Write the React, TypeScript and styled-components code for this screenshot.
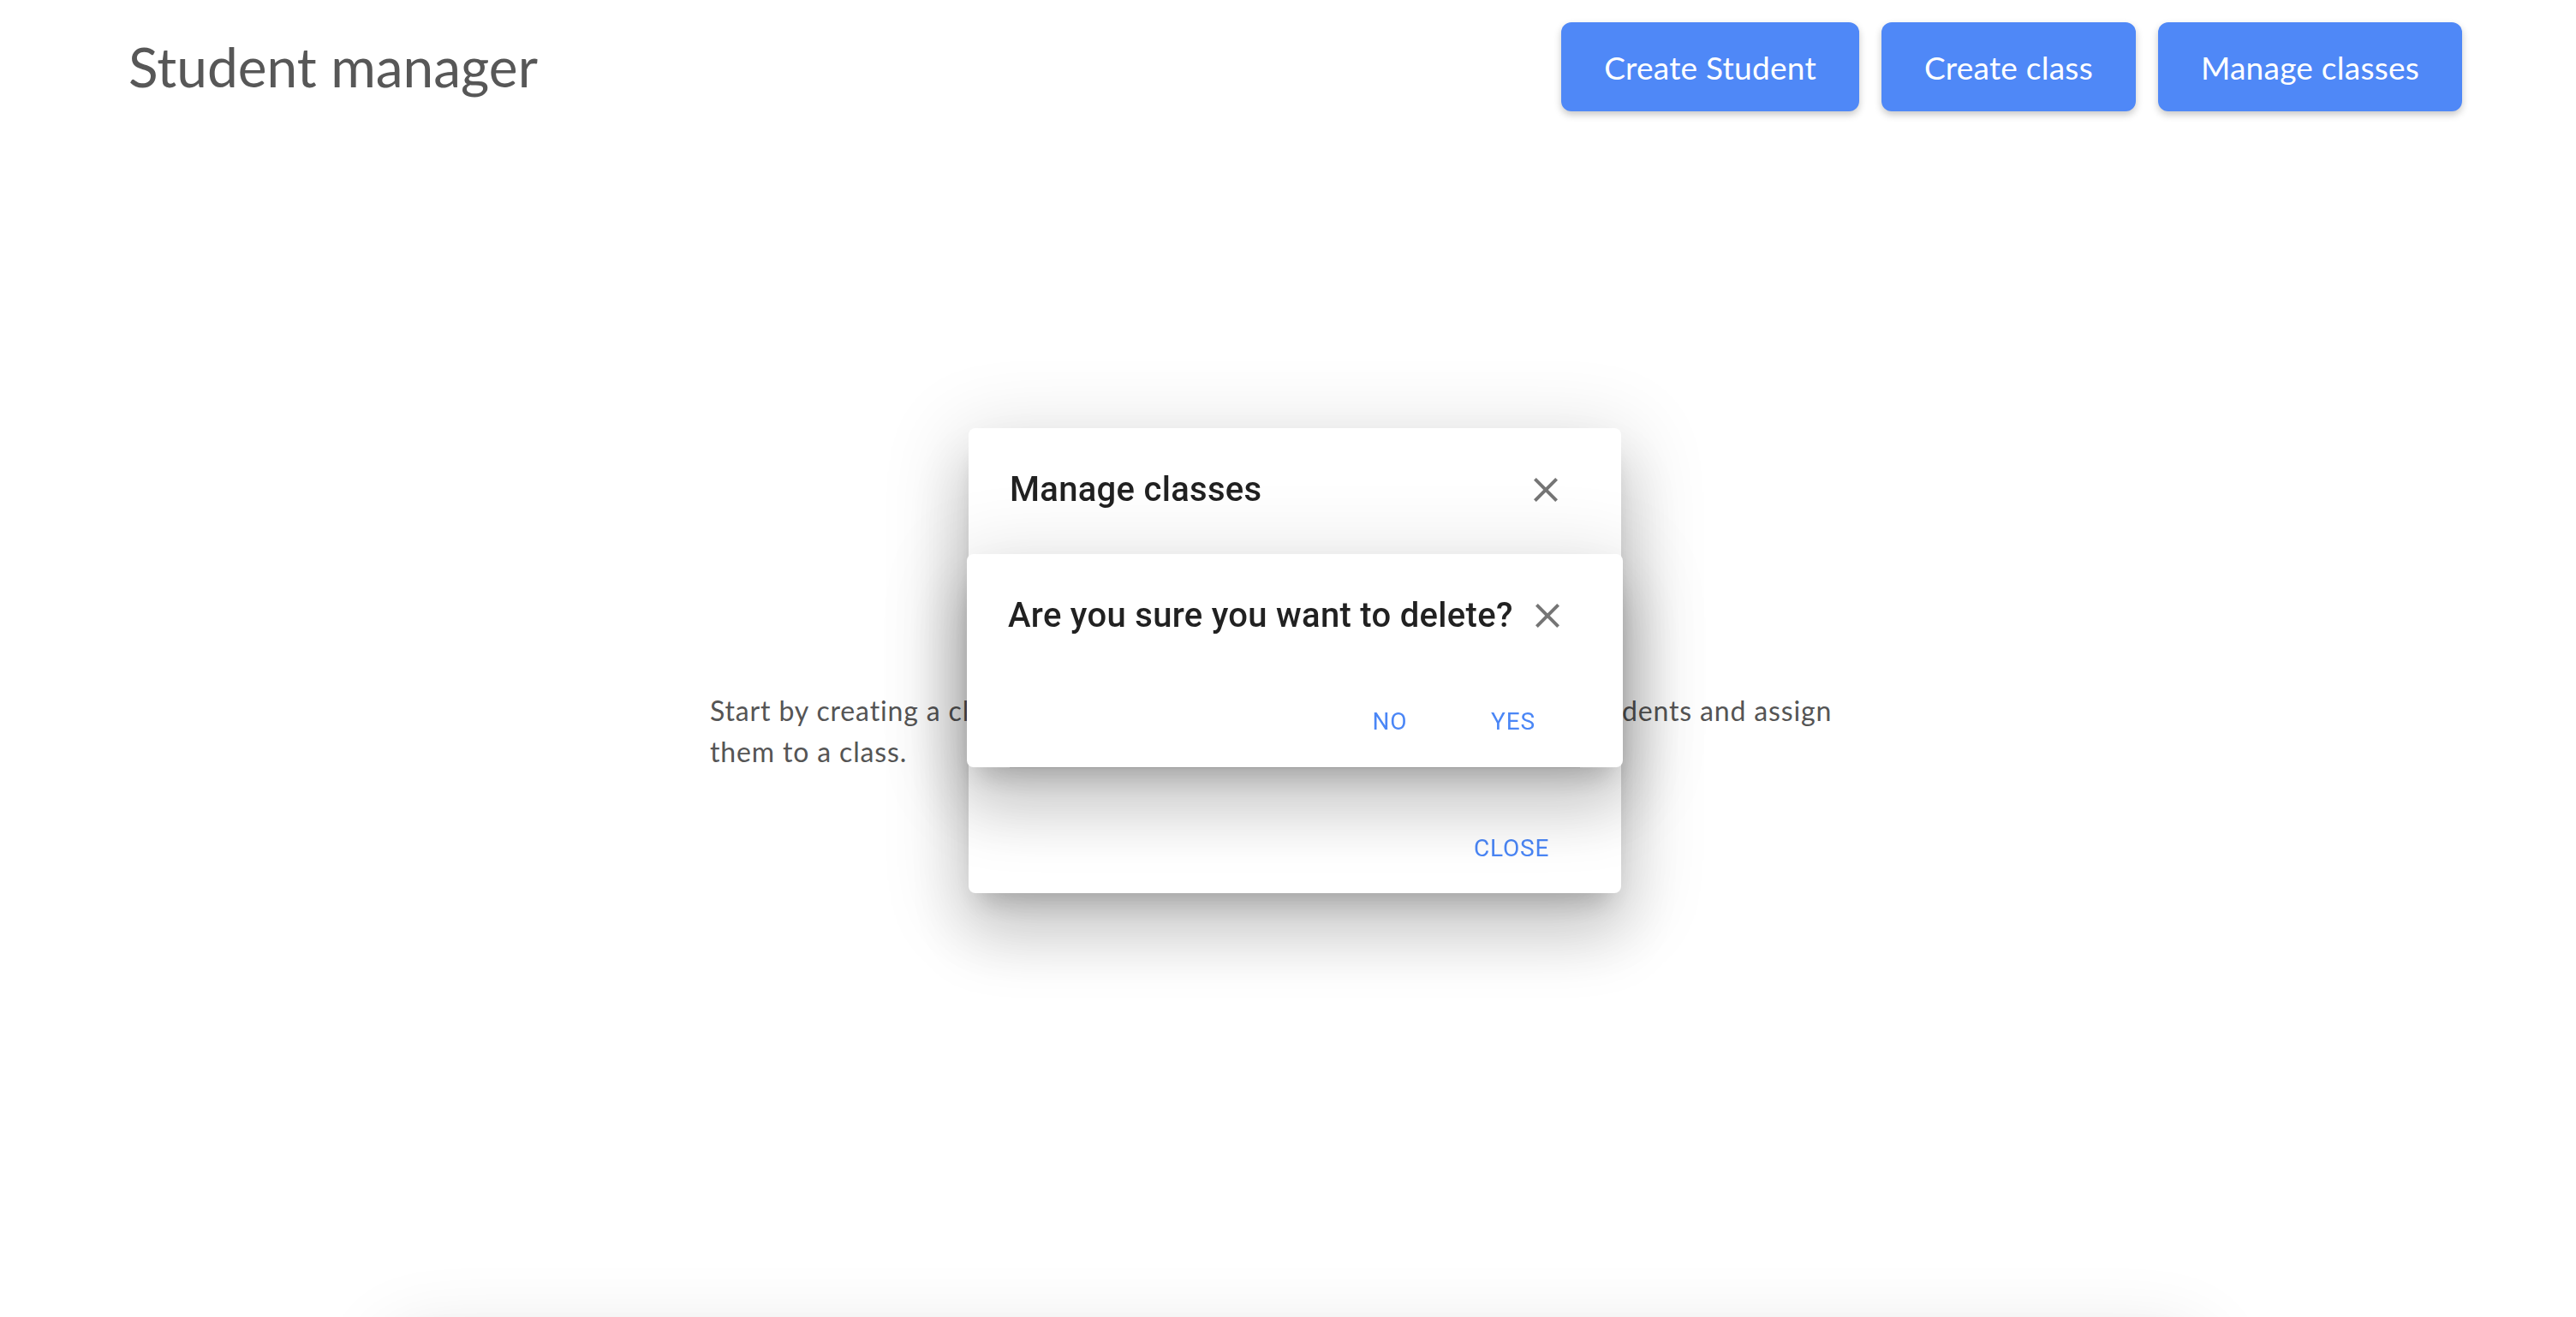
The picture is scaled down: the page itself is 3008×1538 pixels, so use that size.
import React from "react";
import styled, { createGlobalStyle } from "styled-components";

const GlobalStyle = createGlobalStyle`
  * { box-sizing: border-box; }
  html, body { margin: 0; padding: 0; background: #ffffff; }
  body {
    padding-left: 16px;
    font-family: Lato, "Noto Sans", "Open Sans", sans-serif;
    color: #555555;
  }
`;

const Page = styled.div`
  display: flex;
  flex-direction: column;
`;

const Header = styled.header`
  display: flex;
  align-items: center;
  justify-content: space-between;
  padding: 26px 133px 0 134px;
`;

const AppTitle = styled.h1`
  margin: 0;
  font-size: 64px;
  line-height: 1;
  font-weight: 400;
  color: #575757;
`;

const Toolbar = styled.nav`
  display: flex;
  gap: 26px;
`;

const PrimaryButton = styled.button`
  height: 104px;
  padding: 0 50px;
  border: none;
  border-radius: 12px;
  background: #4f88f7;
  color: #ffffff;
  font-family: Lato, "Noto Sans", sans-serif;
  font-size: 37px;
  letter-spacing: 0.25px;
  box-shadow: 0 4px 8px rgba(0, 0, 0, 0.22);
  cursor: pointer;
`;

const Main = styled.main`
  width: 1366px;
  margin: 676px auto 0;
`;

const Intro = styled.p`
  margin: 0;
  font-size: 32px;
  line-height: 48px;
  letter-spacing: 0.85px;
  color: #555555;
`;

const StudentCard = styled.section`
  width: 2084px;
  height: 400px;
  margin: 658px auto 0;
  border-radius: 8px;
  background: #ffffff;
  box-shadow: 0 18px 92px 16px rgba(0, 0, 0, 0.12), 0 48px 76px 6px rgba(0, 0, 0, 0.14);
`;

const Overlay = styled.div`
  position: fixed;
  inset: 0;
  display: flex;
  align-items: center;
  justify-content: center;
  padding: 5px 0 0 16px;
`;

const DialogPaper = styled.div<{ $width: number }>`
  width: ${(p) => p.$width}px;
  display: flex;
  flex-direction: column;
  background: #ffffff;
  border-radius: 8px;
  font-family: Roboto, "Noto Sans", sans-serif;
  box-shadow: 0 22px 30px -14px rgba(0, 0, 0, 0.2), 0 48px 76px 6px rgba(0, 0, 0, 0.14),
    0 18px 92px 16px rgba(0, 0, 0, 0.12);
`;

const TitleRow = styled.div`
  display: flex;
  align-items: center;
  justify-content: space-between;
  padding: 40px 56px 0 48px;
`;

const DialogTitle = styled.h2`
  margin: 0;
  font-size: 40px;
  line-height: 64px;
  font-weight: 500;
  letter-spacing: 0.3px;
  white-space: nowrap;
  color: rgba(0, 0, 0, 0.87);
`;

const IconButton = styled.button`
  flex-shrink: 0;
  width: 64px;
  height: 64px;
  display: flex;
  align-items: center;
  justify-content: center;
  padding: 0;
  border: none;
  border-radius: 50%;
  background: transparent;
  color: rgba(0, 0, 0, 0.54);
  cursor: pointer;
`;

const DialogContent = styled.div`
  padding: 44px 48px 41px;
`;

const ClassList = styled.ul`
  margin: 0;
  padding: 0;
  list-style: none;
`;

const ClassRow = styled.li`
  height: 83px;
  display: flex;
  align-items: center;
  justify-content: space-between;
  border-bottom: 2px solid rgba(0, 0, 0, 0.12);
  font-size: 32px;
  color: rgba(0, 0, 0, 0.87);
`;

const Actions = styled.div<{ $top: number; $bottom: number }>`
  display: flex;
  justify-content: flex-end;
  gap: 16px;
  padding: ${(p) => p.$top}px 64px ${(p) => p.$bottom}px 0;
`;

const TextButton = styled.button`
  min-width: 128px;
  padding: 12px 16px;
  border: none;
  border-radius: 8px;
  background: transparent;
  font-family: Roboto, "Noto Sans", sans-serif;
  font-size: 28px;
  line-height: 49px;
  font-weight: 400;
  letter-spacing: 0.8px;
  text-transform: uppercase;
  color: #4a86f6;
  cursor: pointer;
`;

const CloseIcon = () => (
  <svg width="48" height="48" viewBox="0 0 24 24" fill="currentColor" aria-hidden="true">
    <path d="M19 6.41L17.59 5 12 10.59 6.41 5 5 6.41 10.59 12 5 17.59 6.41 19 12 13.41 17.59 19 19 17.59 13.41 12z" />
  </svg>
);

const DeleteIcon = () => (
  <svg width="48" height="48" viewBox="0 0 24 24" fill="rgba(0,0,0,0.54)" aria-hidden="true">
    <path d="M6 19c0 1.1.9 2 2 2h8c1.1 0 2-.9 2-2V7H6v12zM19 4h-3.5l-1-1h-5l-1 1H5v2h14V4z" />
  </svg>
);

const classes = ["Mathematics", "Physics", "History"];

export default function App() {
  return (
    <>
      <GlobalStyle />
      <Page>
        <Header>
          <AppTitle>Student manager</AppTitle>
          <Toolbar>
            <PrimaryButton>Create Student</PrimaryButton>
            <PrimaryButton>Create class</PrimaryButton>
            <PrimaryButton>Manage classes</PrimaryButton>
          </Toolbar>
        </Header>
        <Main>
          <Intro>
            Start by creating a class using the button above, then you can create students and assign them to a
            class.
          </Intro>
        </Main>
        <StudentCard />
      </Page>

      <Overlay>
        <DialogPaper $width={762}>
          <TitleRow>
            <DialogTitle>Manage classes</DialogTitle>
            <IconButton aria-label="close">
              <CloseIcon />
            </IconButton>
          </TitleRow>
          <DialogContent>
            <ClassList>
              {classes.map((c) => (
                <ClassRow key={c}>
                  {c}
                  <DeleteIcon />
                </ClassRow>
              ))}
            </ClassList>
          </DialogContent>
          <Actions $top={16} $bottom={16}>
            <TextButton>Close</TextButton>
          </Actions>
        </DialogPaper>
      </Overlay>

      <Overlay>
        <DialogPaper $width={766}>
          <TitleRow>
            <DialogTitle>Are you sure you want to delete?</DialogTitle>
            <IconButton aria-label="close">
              <CloseIcon />
            </IconButton>
          </TitleRow>
          <Actions $top={55} $bottom={17}>
            <TextButton>No</TextButton>
            <TextButton>Yes</TextButton>
          </Actions>
        </DialogPaper>
      </Overlay>
    </>
  );
}
